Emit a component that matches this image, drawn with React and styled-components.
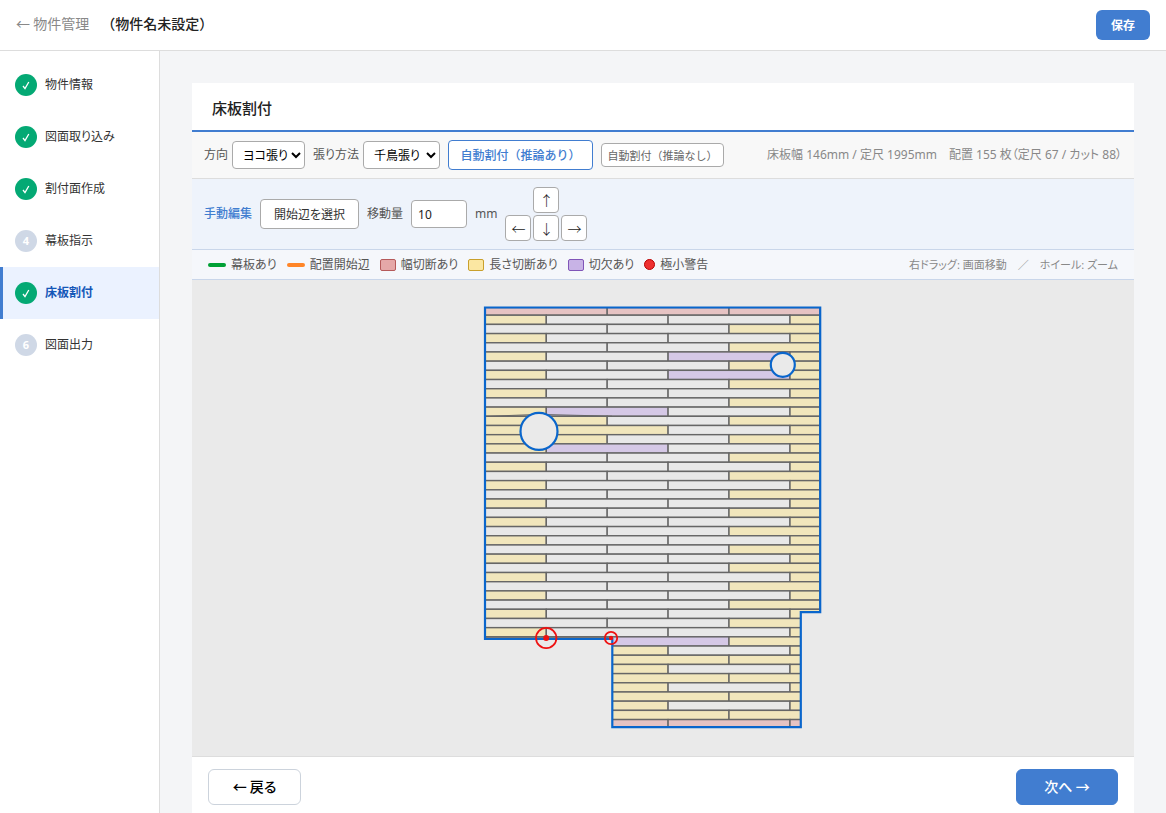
import React from "react";
import styled, { createGlobalStyle } from "styled-components";

const GlobalStyle = createGlobalStyle`
  * {
    box-sizing: border-box;
  }

  body {
    margin: 0;
    background: #f4f5f7;
    color: #222;
    font-family: "Noto Sans", "Noto Sans CJK JP", sans-serif;
    font-size: 12px;
    line-height: 18px;
  }

  button,
  input,
  select {
    font-family: inherit;
    margin: 0;
  }
`;

const Page = styled.div`
  display: flex;
  flex-direction: column;
  min-height: 100vh;
`;

const TopBar = styled.header`
  display: flex;
  align-items: center;
  justify-content: space-between;
  height: 51px;
  padding: 0 16px;
  background: #fff;
  border-bottom: 1px solid #ddd;
`;

const Crumbs = styled.div`
  display: flex;
  gap: 12px;
  padding-bottom: 4px;
  font-family: "Noto Sans CJK JP", sans-serif;
  font-size: 14px;
  line-height: 20px;
`;

const BackLink = styled.a`
  color: #888;
  text-decoration: none;
`;

const ProjectName = styled.span`
  font-weight: 500;
`;

const SaveButton = styled.button`
  width: 54px;
  height: 30px;
  padding: 0;
  border: none;
  border-radius: 6px;
  background: #417dd0;
  color: #fff;
  font-size: 12px;
  font-weight: 700;
  cursor: pointer;
`;

const Body = styled.div`
  display: flex;
  flex: 1;
`;

const Sidebar = styled.nav`
  flex: none;
  width: 160px;
  padding-top: 8px;
  background: #fff;
  border-right: 1px solid #ddd;
`;

const Step = styled.a`
  display: flex;
  align-items: center;
  gap: 8px;
  height: 52px;
  padding-left: 12px;
  border-left: 3px solid ${({ $active }) => ($active ? "#417dd0" : "transparent")};
  background: ${({ $active }) => ($active ? "#ebf2ff" : "transparent")};
  color: ${({ $active }) => ($active ? "#1558b8" : "#333")};
  font-weight: ${({ $active }) => ($active ? 700 : 400)};
  font-feature-settings: "palt";
  text-decoration: none;
`;

const StepMark = styled.span`
  display: flex;
  align-items: center;
  justify-content: center;
  width: 22px;
  height: 22px;
  border-radius: 50%;
  background: ${({ $done }) => ($done ? "#04a974" : "#cfd8e6")};
  color: #fff;
  font-size: 11px;
  font-weight: 700;
`;

const Main = styled.main`
  display: flex;
  flex: 1;
  min-width: 0;
  padding: 32px 32px 0;
`;

const Card = styled.section`
  display: flex;
  flex: 1;
  flex-direction: column;
  min-width: 0;
  background: #fff;
`;

const CardTitle = styled.h1`
  margin: 0;
  padding: 15px 20px 12px;
  border-bottom: 2px solid #417dd0;
  font-size: 15px;
  font-weight: 500;
  line-height: 20px;
`;

const Toolbar = styled.div`
  display: flex;
  align-items: center;
  gap: 8px;
  min-height: ${({ $height }) => $height}px;
  padding: 0 ${({ $side }) => $side || 12}px;
  background: ${({ $bg }) => $bg};
  border-bottom: 1px solid ${({ $line }) => $line};
  color: #555;
  line-height: 20px;
`;

const Field = styled.label`
  display: flex;
  align-items: center;
  gap: ${({ $gap }) => $gap || 4}px;
  font-feature-settings: "palt";
  white-space: nowrap;
`;

const Select = styled.select`
  width: ${({ $width }) => $width}px;
  height: 28px;
  padding: 0 0 0 6px;
  border: 1px solid #aaa;
  border-radius: 4px;
  background: #fff;
  color: #000;
  font-size: 12px;
  font-feature-settings: "palt";
`;

const NumberInput = styled.input`
  width: 56px;
  height: 28px;
  padding: 0 6px;
  border: 1px solid #aaa;
  border-radius: 4px;
  background: #fff;
  color: #222;
  font-size: 12px;
`;

const ToolButton = styled.button`
  width: ${({ $width }) => $width}px;
  height: 30px;
  padding: 0;
  border: 1px solid ${({ $primary }) => ($primary ? "#417dd0" : "#aaa")};
  border-radius: 4px;
  background: #fff;
  color: ${({ $primary }) => ($primary ? "#417dd0" : "#333")};
  font-size: 12px;
  font-weight: ${({ $primary }) => ($primary ? 500 : 400)};
  font-feature-settings: ${({ $primary }) => ($primary ? "normal" : '"palt"')};
  white-space: nowrap;
  cursor: pointer;
`;

const SmallButton = styled(ToolButton)`
  height: 24px;
  color: #666;
  font-size: 11px;
  font-feature-settings: normal;
`;

const SideText = styled.span`
  margin-left: auto;
  color: #888;
  font-size: ${({ $small }) => ($small ? 11 : 12)}px;
  font-feature-settings: "palt";
  white-space: pre;
`;

const ModeLabel = styled.span`
  color: #417dd0;
  font-weight: 500;
`;

const ArrowPad = styled.div`
  display: grid;
  grid-template-columns: repeat(3, 26px);
  grid-template-rows: repeat(2, 26px);
  gap: 2px;
`;

const ArrowButton = styled.button`
  grid-area: ${({ $area }) => $area};
  padding: 0;
  border: 1px solid #aaa;
  border-radius: 4px;
  background: #fff;
  color: #222;
  font-family: "Noto Sans CJK JP", sans-serif;
  font-size: 14px;
  font-weight: 300;
  line-height: 20px;
  cursor: pointer;
`;

const Legend = styled.ul`
  display: flex;
  align-items: center;
  gap: 10px;
  margin: 0;
  padding: 0;
  list-style: none;
`;

const LegendItem = styled.li`
  display: flex;
  align-items: center;
  gap: 5px;
  font-feature-settings: "palt";
  white-space: nowrap;
`;

const LineMark = styled.span`
  width: 18px;
  height: 4px;
  border-radius: 2px;
  background: ${({ $color }) => $color};
`;

const BoxMark = styled.span`
  width: 16px;
  height: 12px;
  border: 1px solid ${({ $line }) => $line};
  border-radius: 2px;
  background: ${({ $color }) => $color};
`;

const DotMark = styled.span`
  width: 11px;
  height: 11px;
  border: 1px solid #b80000;
  border-radius: 50%;
  background: #ee3030;
`;

const Canvas = styled.div`
  display: flex;
  flex: 1;
  min-height: 400px;
  background: #eaeaea;

  svg {
    flex: 1;
    width: 100%;
    min-width: 0;
  }
`;

const Footer = styled.footer`
  display: flex;
  justify-content: space-between;
  padding: 12px 16px 8px;
  border-top: 1px solid #ddd;
`;

const NavButton = styled.button`
  width: ${({ $width }) => $width}px;
  height: 36px;
  padding: 0 0 2px;
  border: 1px solid ${({ $primary }) => ($primary ? "#417dd0" : "#ccd3dc")};
  border-radius: 6px;
  background: ${({ $primary }) => ($primary ? "#417dd0" : "#fff")};
  color: ${({ $primary }) => ($primary ? "#fff" : "#000")};
  font-family: "Noto Sans CJK JP", sans-serif;
  font-size: 14px;
  font-weight: 500;
  font-feature-settings: "palt";
  cursor: pointer;
`;

const STEPS = [
  { label: "物件情報", done: true },
  { label: "図面取り込み", done: true },
  { label: "割付面作成", done: true },
  { label: "幕板指示", done: false },
  { label: "床板割付", done: true, active: true },
  { label: "図面出力", done: false }
];

const FILLS = {
  full: "#e8e8e8",
  length: "#f1e6bc",
  width: "#e6c3c3",
  notch: "#d5c8e6"
};

const TOP = 307.5;
const FIRST = 315.2;
const PITCH = 9.19;
const ROWS = 46;
const EVEN_JOINTS = [485, 607.2, 729, 820];
const ODD_JOINTS = [485, 546.3, 668.1, 790, 820];
const OUTLINE = "485,307.5 820.2,307.5 820.2,612.2 800.8,612.2 800.8,727.2 612.3,727.2 612.3,639 485,639";

// row-column pairs that differ from the regular pattern
const SPECIAL = {
  "5-2": "notch",
  "7-2": "notch",
  "11-1": "notch",
  "12-0": "length",
  "13-1": "length",
  "14-0": "length",
  "15-1": "notch",
  "36-1": "notch"
};

function boardKind(row, col, last) {
  if (row === 0 || row === ROWS - 1) return "width";
  const special = SPECIAL[`${row}-${col}`];
  if (special) return special;
  if (col === last) return "length";
  if (row > 36) return col === 1 ? "length" : "full";
  return row % 2 && col === 0 ? "length" : "full";
}

function buildBoards() {
  const boards = [];
  for (let row = 0; row < ROWS; row += 1) {
    const joints = row % 2 ? ODD_JOINTS : EVEN_JOINTS;
    const y = row === 0 ? TOP : FIRST + PITCH * (row - 1);
    const bottom = row === ROWS - 1 ? 727.2 : FIRST + PITCH * row;
    for (let col = 0; col < joints.length - 1; col += 1) {
      // the lower part starts at the step in the outline
      const x = row >= 36 ? Math.max(joints[col], 612.3) : joints[col];
      if (joints[col + 1] > x) {
        boards.push({
          key: `${row}-${col}`,
          x,
          y,
          width: joints[col + 1] - x,
          height: bottom - y,
          fill: FILLS[boardKind(row, col, joints.length - 2)]
        });
      }
    }
  }
  return boards;
}

const BOARDS = buildBoards();

function FloorPlan() {
  return (
    <svg viewBox="192 280 942 476" role="img" aria-label="床板割付">
      <defs>
        <clipPath id="floor">
          <polygon points={OUTLINE} />
        </clipPath>
      </defs>
      <g clipPath="url(#floor)" stroke="#666" strokeWidth="1.4">
        {BOARDS.map(({ key, ...board }) => (
          <rect key={key} {...board} />
        ))}
        <path d="M485 637H612.3M607.2 637V639" />
        <path d="M485 416.4L539 414.4L612 416.2" fill="none" strokeWidth="1" />
      </g>
      <g fill="#eaeaea" stroke="#0a66cc" strokeWidth="2.2">
        <polygon points={OUTLINE} fill="none" />
        <circle cx="539" cy="431.4" r="18.5" />
        <circle cx="782.8" cy="364.8" r="12" />
      </g>
      <g fill="none" stroke="#ee1111" strokeWidth="1.8">
        <circle cx="546.2" cy="638" r="10.2" />
        <circle cx="611" cy="638" r="6.2" />
      </g>
      <circle cx="546.2" cy="638" r="3" fill="#ee1111" />
      <circle cx="611" cy="638" r="2.2" fill="#ee1111" />
    </svg>
  );
}

function CheckIcon() {
  return (
    <svg width="8" height="9" viewBox="0 0 8 9" fill="none" stroke="#fff" strokeWidth="1.3" aria-hidden="true">
      <path d="M1 5L3 7.6L6.8 1" />
    </svg>
  );
}

export default function App() {
  return (
    <Page lang="ja">
      <GlobalStyle />
      <TopBar>
        <Crumbs>
          <BackLink href="#">← 物件管理</BackLink>
          <ProjectName>（物件名未設定）</ProjectName>
        </Crumbs>
        <SaveButton type="button">保存</SaveButton>
      </TopBar>
      <Body>
        <Sidebar>
          {STEPS.map((step, index) => (
            <Step key={step.label} href="#" $active={step.active}>
              <StepMark $done={step.done}>{step.done ? <CheckIcon /> : index + 1}</StepMark>
              {step.label}
            </Step>
          ))}
        </Sidebar>
        <Main>
          <Card>
            <CardTitle>床板割付</CardTitle>
            <Toolbar $height={47} $bg="#f8f8f8" $line="#ddd">
              <Field>
                方向
                <Select $width={73} defaultValue="yoko">
                  <option value="yoko">ヨコ張り</option>
                  <option value="tate">タテ張り</option>
                </Select>
              </Field>
              <Field>
                張り方法
                <Select $width={77} defaultValue="chidori">
                  <option value="chidori">千鳥張り</option>
                </Select>
              </Field>
              <ToolButton type="button" $primary $width={145}>
                自動割付（推論あり）
              </ToolButton>
              <SmallButton type="button" $width={123}>
                自動割付（推論なし）
              </SmallButton>
              <SideText>床板幅 146mm / 定尺 1995mm　配置 155 枚（定尺 67 / カット 88）</SideText>
            </Toolbar>
            <Toolbar $height={71} $bg="#eef3fb" $line="#c9d6ea">
              <ModeLabel>手動編集</ModeLabel>
              <ToolButton type="button" $width={99}>
                開始辺を選択
              </ToolButton>
              <Field $gap={8}>
                移動量
                <NumberInput type="text" inputMode="numeric" defaultValue="10" />
                mm
              </Field>
              <ArrowPad>
                <ArrowButton type="button" $area="1 / 2">↑</ArrowButton>
                <ArrowButton type="button" $area="2 / 1">←</ArrowButton>
                <ArrowButton type="button" $area="2 / 2">↓</ArrowButton>
                <ArrowButton type="button" $area="2 / 3">→</ArrowButton>
              </ArrowPad>
            </Toolbar>
            <Toolbar $height={30} $side={16} $bg="#f5f7fb" $line="#c9d6ea">
              <Legend>
                <LegendItem>
                  <LineMark $color="#00a035" />
                  幕板あり
                </LegendItem>
                <LegendItem>
                  <LineMark $color="#ff8528" />
                  配置開始辺
                </LegendItem>
                <LegendItem>
                  <BoxMark $color="#e5a8a8" $line="#b55a5a" />
                  幅切断あり
                </LegendItem>
                <LegendItem>
                  <BoxMark $color="#fbe7a2" $line="#c9a02c" />
                  長さ切断あり
                </LegendItem>
                <LegendItem>
                  <BoxMark $color="#c8b3e6" $line="#8055b8" />
                  切欠あり
                </LegendItem>
                <LegendItem>
                  <DotMark />
                  極小警告
                </LegendItem>
              </Legend>
              <SideText $small>右ドラッグ: 画面移動　／　ホイール: ズーム</SideText>
            </Toolbar>
            <Canvas>
              <FloorPlan />
            </Canvas>
            <Footer>
              <NavButton type="button" $width={93}>← 戻る</NavButton>
              <NavButton type="button" $primary $width={102}>次へ →</NavButton>
            </Footer>
          </Card>
        </Main>
      </Body>
    </Page>
  );
}
